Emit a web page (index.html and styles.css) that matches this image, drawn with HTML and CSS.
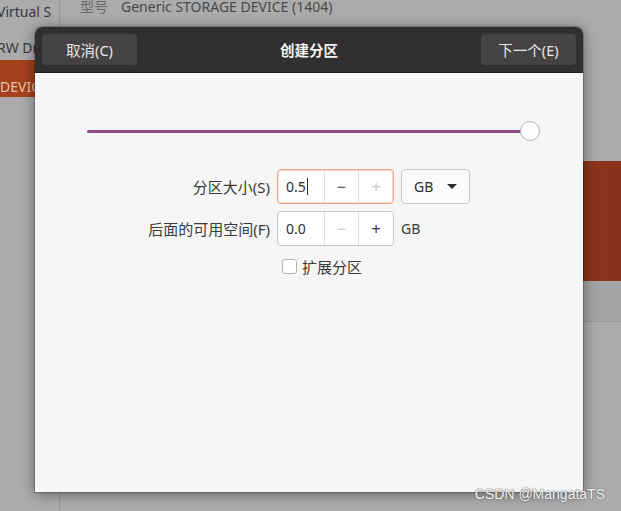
FILE: index.html
```html
<!DOCTYPE html>
<html lang="zh-CN">
<head>
    <meta charset="UTF-8">
    <meta name="viewport" content="width=device-width, initial-scale=1.0">
    <title>创建分区</title>
    <link rel="stylesheet" href="styles.css">
</head>
<body>
    <div class="app">
        <div class="sidebar">
            <div class="side-item">Virtual S</div>
            <div class="side-item short">RW Dri</div>
            <div class="side-item active">DEVIC</div>
        </div>
        <div class="main">
            <div class="info"><span class="info-key">型号</span>Generic STORAGE DEVICE (1404)</div>
            <div class="disk-bar"></div>
            <div class="disk-strip"></div>
        </div>
    </div>

    <div class="dialog">
        <div class="dialog-header">
            <button class="header-btn">取消(C)</button>
            <div class="dialog-title">创建分区</div>
            <button class="header-btn">下一个(E)</button>
        </div>
        <div class="dialog-body">
            <div class="slider">
                <div class="slider-track"></div>
                <div class="slider-knob"></div>
            </div>
            <div class="form">
                <label class="form-label">分区大小(S)</label>
                <div class="form-field">
                    <div class="spin focused">
                        <div class="spin-entry">0.5<span class="caret"></span></div>
                        <div class="spin-btn">−</div>
                        <div class="spin-btn disabled">+</div>
                    </div>
                    <div class="combo">GB<span class="combo-arrow"></span></div>
                </div>

                <label class="form-label">后面的可用空间(F)</label>
                <div class="form-field">
                    <div class="spin">
                        <div class="spin-entry">0.0</div>
                        <div class="spin-btn disabled">−</div>
                        <div class="spin-btn">+</div>
                    </div>
                    <span class="unit">GB</span>
                </div>

                <div></div>
                <div class="check-row">
                    <span class="checkbox"></span>扩展分区
                </div>
            </div>
        </div>
    </div>

    <div class="watermark">CSDN @MangataTS</div>
</body>
</html>
```

FILE: styles.css
```css
/* Основные стили */
body {
    margin: 0;
    background: #ababab;
    font-family: "Noto Sans", "Noto Sans CJK SC", sans-serif;
    font-size: 14px;
    overflow: hidden;
}
.app {
    display: flex;
    height: 511px;
}
.sidebar {
    width: 59px;
    border-right: 1px solid #9a9a9a;
    padding-top: 3px;
    overflow: hidden;
    white-space: nowrap;
}
.side-item {
    height: 36px;
    line-height: 18px;
    color: #3a3a3a;
    margin-left: -3px;
}
.side-item.short {
    height: 21px;
}
.side-item.active {
    height: 19px;
    padding-top: 18px;
    background: #a5421d;
    color: #e6c3b3;
    margin-left: 0;
}
.main {
    flex: 1;
    padding-left: 20px;
}
.info {
    color: #4a4a4a;
    line-height: 14px;
}
.info-key {
    color: #6a6a6a;
    margin-right: 13px;
}
.disk-bar {
    margin-top: 147px;
    height: 120px;
    background: linear-gradient(90deg, #7a3016, #953b19 40%, #88341a);
}
.disk-strip {
    height: 40px;
    background: #a3a3a3;
    border-bottom: 1px solid #999;
}

/* Диалог */
.dialog {
    position: absolute;
    left: 35px;
    top: 27px;
    width: 548px;
    height: 465px;
    border-radius: 7px 7px 0 0;
    background: #f6f6f6;
    box-shadow: 0 2px 14px rgba(0, 0, 0, 0.45), 0 0 0 1px rgba(0, 0, 0, 0.2);
    overflow: hidden;
}
.dialog-header {
    height: 46px;
    background: #312f2f;
    display: flex;
    align-items: center;
    justify-content: space-between;
    padding: 0 7px;
    border-bottom: 1px solid #202020;
    box-sizing: border-box;
}
.header-btn {
    width: 95px;
    height: 31px;
    background: #454343;
    border: none;
    border-radius: 4px;
    color: #e8e8e6;
    font-family: inherit;
    font-size: 14.5px;
    padding: 0;
}
.dialog-title {
    color: #f2f2f2;
    font-weight: bold;
    font-size: 14.5px;
}
.dialog-body {
    padding-top: 48px;
}
.slider {
    position: relative;
    height: 20px;
    margin: 0 43px 0 52px;
    display: flex;
    align-items: center;
}
.slider-track {
    flex: 1;
    height: 3px;
    background: #8e4a88;
    border-radius: 2px;
    margin-right: 10px;
}
.slider-knob {
    position: absolute;
    right: 0;
    top: 0;
    width: 18px;
    height: 18px;
    border-radius: 50%;
    background: #fdfdfd;
    border: 1px solid #b9b4b0;
}
.form {
    margin-top: 28px;
    display: grid;
    grid-template-columns: 235px auto;
    column-gap: 7px;
    row-gap: 7px;
    align-items: center;
}
.form-label {
    text-align: right;
    color: #3a3a3a;
    font-size: 15px;
}
.form-field {
    display: flex;
    align-items: center;
    gap: 7px;
}
.spin {
    display: flex;
    width: 117px;
    height: 35px;
    box-sizing: border-box;
    border: 1px solid #cdc7c2;
    border-radius: 4px;
    background: #fff;
}
.spin.focused {
    border-color: #f0a58d;
    box-shadow: inset 0 0 0 1px #fbd9cc;
}
.spin-entry {
    width: 47px;
    box-sizing: border-box;
    padding-left: 8px;
    display: flex;
    align-items: center;
    color: #2e2e2e;
}
.caret {
    display: inline-block;
    width: 1px;
    height: 17px;
    background: #2e2e2e;
    margin-left: 1px;
}
.spin-btn {
    width: 35px;
    border-left: 1px solid #e3e0dd;
    display: flex;
    align-items: center;
    justify-content: center;
    color: #3d3d3d;
    font-size: 17px;
}
.spin-btn.disabled {
    color: #cbc8c5;
}
.combo {
    width: 69px;
    height: 35px;
    box-sizing: border-box;
    border: 1px solid #cdc7c2;
    border-radius: 4px;
    background: #fbfbfb;
    display: flex;
    align-items: center;
    justify-content: space-between;
    padding: 0 12px 0 12px;
    color: #2e2e2e;
}
.combo-arrow {
    width: 0;
    height: 0;
    border-left: 5px solid transparent;
    border-right: 5px solid transparent;
    border-top: 5px solid #2e2e2e;
}
.unit {
    color: #3a3a3a;
}
.check-row {
    display: flex;
    align-items: center;
    gap: 5px;
    padding-left: 5px;
    margin-top: 3px;
    color: #3a3a3a;
    font-size: 15px;
}
.checkbox {
    width: 13px;
    height: 13px;
    border: 1px solid #b8b3ae;
    border-radius: 3px;
    background: #fff;
}
.watermark {
    position: absolute;
    right: 16px;
    bottom: 9px;
    color: #f4f4f4;
    font-family: "Liberation Sans", sans-serif;
    font-size: 14px;
    text-shadow: 0 0 1px #555, 0 0 2px #777;
}
```
